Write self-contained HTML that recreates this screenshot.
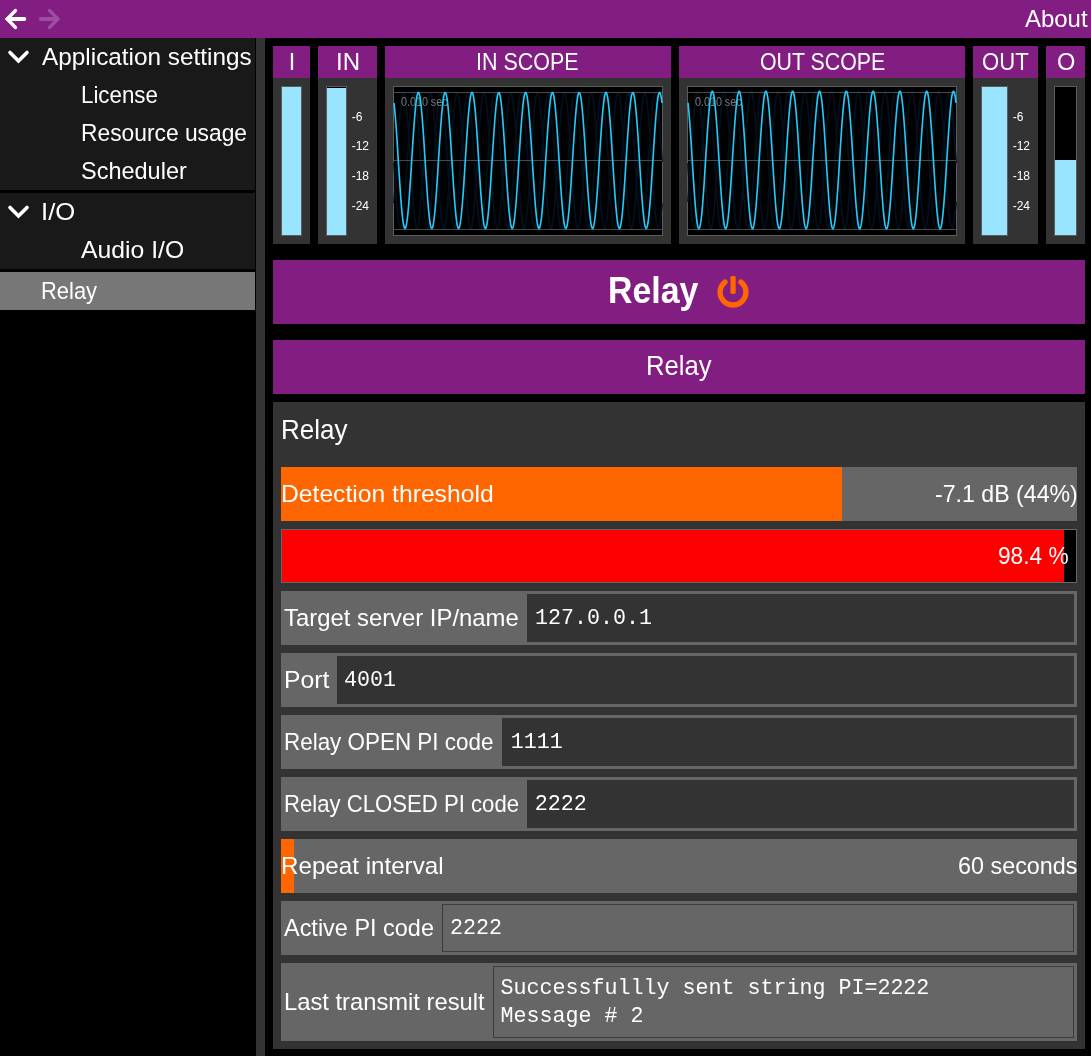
<!DOCTYPE html>
<html><head><meta charset="utf-8"><title>Relay</title><style>
html,body{margin:0;padding:0;background:#000;}
body{width:1091px;height:1056px;position:relative;overflow:hidden;font-family:"Liberation Sans",sans-serif;}
.r{position:absolute;display:block;}
.tl{position:absolute;left:0;top:0;width:1091px;height:1056px;will-change:transform;}
.t{position:absolute;white-space:pre;line-height:1;color:#fff;transform-origin:0 0;font-family:"Liberation Sans",sans-serif;}
</style></head><body>
<div class="r" style="left:0px;top:0px;width:1091px;height:38px;background:#821e82;"></div>
<div class="r" style="left:0px;top:38px;width:255px;height:152px;background:#191919;"></div>
<div class="r" style="left:0px;top:193px;width:255px;height:76px;background:#191919;"></div>
<div class="r" style="left:0px;top:272px;width:255px;height:38px;background:#777777;"></div>
<div class="r" style="left:256px;top:38px;width:9px;height:1018px;background:#333333;"></div>
<div class="r" style="left:273px;top:46px;width:37px;height:198px;background:#333333;"></div>
<div class="r" style="left:273px;top:46px;width:37px;height:32px;background:#821e82;"></div>
<div class="r" style="left:318px;top:46px;width:59px;height:198px;background:#333333;"></div>
<div class="r" style="left:318px;top:46px;width:59px;height:32px;background:#821e82;"></div>
<div class="r" style="left:385px;top:46px;width:286px;height:198px;background:#333333;"></div>
<div class="r" style="left:385px;top:46px;width:286px;height:32px;background:#821e82;"></div>
<div class="r" style="left:679px;top:46px;width:286px;height:198px;background:#333333;"></div>
<div class="r" style="left:679px;top:46px;width:286px;height:32px;background:#821e82;"></div>
<div class="r" style="left:973px;top:46px;width:65px;height:198px;background:#333333;"></div>
<div class="r" style="left:973px;top:46px;width:65px;height:32px;background:#821e82;"></div>
<div class="r" style="left:1046px;top:46px;width:39px;height:198px;background:#333333;"></div>
<div class="r" style="left:1046px;top:46px;width:39px;height:32px;background:#821e82;"></div>
<div class="r" style="left:281px;top:86px;width:21px;height:150px;background:#5c5c5c;"></div><div class="r" style="left:282px;top:87px;width:19px;height:148px;background:#000;"></div><div class="r" style="left:282px;top:87px;width:19px;height:148px;background:#99e5ff;"></div>
<div class="r" style="left:326px;top:86px;width:21px;height:150px;background:#5c5c5c;"></div><div class="r" style="left:327px;top:87px;width:19px;height:148px;background:#000;"></div><div class="r" style="left:327px;top:88px;width:19px;height:147px;background:#99e5ff;"></div>
<div class="r" style="left:981px;top:86px;width:27px;height:150px;background:#5c5c5c;"></div><div class="r" style="left:982px;top:87px;width:25px;height:148px;background:#000;"></div><div class="r" style="left:982px;top:87px;width:25px;height:148px;background:#99e5ff;"></div>
<div class="r" style="left:1054px;top:86px;width:23px;height:150px;background:#5c5c5c;"></div><div class="r" style="left:1055px;top:87px;width:21px;height:148px;background:#000;"></div><div class="r" style="left:1055px;top:160px;width:21px;height:75px;background:#99e5ff;"></div>
<svg class="r" style="left:393px;top:86px" width="270" height="150" viewBox="0 0 270 150"><rect x="0.5" y="0.5" width="269" height="149" fill="#000" stroke="#5c5c5c"/><path d="M1.0,76.1 L1.5,84.0 L2.0,91.8 L2.5,99.4 L3.0,106.6 L3.5,113.4 L4.0,119.7 L4.5,125.3 L5.0,130.3 L5.5,134.4 L6.0,137.8 L6.5,140.3 L7.0,141.8 L7.5,142.5 L8.0,142.2 L8.5,141.0 L9.0,138.9 L9.5,135.9 L10.0,132.0 L10.5,127.4 L11.0,122.0 L11.5,116.0 L12.0,109.4 L12.5,102.4 L13.0,94.9 L13.5,87.2 L14.0,79.3 L14.5,71.3 L15.0,63.4 L15.5,55.6 L16.0,48.1 L16.5,41.0 L17.0,34.3 L17.5,28.1 L18.0,22.6 L18.5,17.8 L19.0,13.8 L19.5,10.7 L20.0,8.4 L20.5,7.0 L21.0,6.5 L21.5,7.0 L22.0,8.4 L22.5,10.7 L23.0,13.8 L23.5,17.8 L24.0,22.6 L24.5,28.1 L25.0,34.3 L25.5,41.0 L26.0,48.1 L26.5,55.6 L27.0,63.4 L27.5,71.3 L28.0,79.3 L28.5,87.2 L29.0,94.9 L29.5,102.4 L30.0,109.4 L30.5,116.0 L31.0,122.0 L31.5,127.4 L32.0,132.0 L32.5,135.9 L33.0,138.9 L33.5,141.0 L34.0,142.2 L34.5,142.5 L35.0,141.8 L35.5,140.3 L36.0,137.8 L36.5,134.4 L37.0,130.3 L37.5,125.3 L38.0,119.7 L38.5,113.4 L39.0,106.6 L39.5,99.4 L40.0,91.8 L40.5,84.0 L41.0,76.1 L41.5,68.1 L42.0,60.3 L42.5,52.6 L43.0,45.2 L43.5,38.2 L44.0,31.7 L44.5,25.9 L45.0,20.6 L45.5,16.1 L46.0,12.5 L46.5,9.6 L47.0,7.7 L47.5,6.7 L48.0,6.6 L48.5,7.4 L49.0,9.2 L49.5,11.8 L50.0,15.3 L50.5,19.7 L51.0,24.8 L51.5,30.5 L52.0,36.9 L52.5,43.8 L53.0,51.1 L53.5,58.7 L54.0,66.5 L54.5,74.5 L55.0,82.5 L55.5,90.3 L56.0,97.9 L56.5,105.2 L57.0,112.1 L57.5,118.5 L58.0,124.2 L58.5,129.3 L59.0,133.7 L59.5,137.2 L60.0,139.8 L60.5,141.6 L61.0,142.4 L61.5,142.3 L62.0,141.3 L62.5,139.4 L63.0,136.5 L63.5,132.9 L64.0,128.4 L64.5,123.1 L65.0,117.3 L65.5,110.8 L66.0,103.8 L66.5,96.4 L67.0,88.7 L67.5,80.9 L68.0,72.9 L68.5,65.0 L69.0,57.2 L69.5,49.6 L70.0,42.4 L70.5,35.6 L71.0,29.3 L71.5,23.7 L72.0,18.7 L72.5,14.6 L73.0,11.2 L73.5,8.7 L74.0,7.2 L74.5,6.5 L75.0,6.8 L75.5,8.0 L76.0,10.1 L76.5,13.1 L77.0,17.0 L77.5,21.6 L78.0,27.0 L78.5,33.0 L79.0,39.6 L79.5,46.6 L80.0,54.1 L80.5,61.8 L81.0,69.7 L81.5,77.7 L82.0,85.6 L82.5,93.4 L83.0,100.9 L83.5,108.0 L84.0,114.7 L84.5,120.9 L85.0,126.4 L85.5,131.2 L86.0,135.2 L86.5,138.3 L87.0,140.6 L87.5,142.0 L88.0,142.5 L88.5,142.0 L89.0,140.6 L89.5,138.3 L90.0,135.2 L90.5,131.2 L91.0,126.4 L91.5,120.9 L92.0,114.7 L92.5,108.0 L93.0,100.9 L93.5,93.4 L94.0,85.6 L94.5,77.7 L95.0,69.7 L95.5,61.8 L96.0,54.1 L96.5,46.6 L97.0,39.6 L97.5,33.0 L98.0,27.0 L98.5,21.6 L99.0,17.0 L99.5,13.1 L100.0,10.1 L100.5,8.0 L101.0,6.8 L101.5,6.5 L102.0,7.2 L102.5,8.7 L103.0,11.2 L103.5,14.6 L104.0,18.7 L104.5,23.7 L105.0,29.3 L105.5,35.6 L106.0,42.4 L106.5,49.6 L107.0,57.2 L107.5,65.0 L108.0,72.9 L108.5,80.9 L109.0,88.7 L109.5,96.4 L110.0,103.8 L110.5,110.8 L111.0,117.3 L111.5,123.1 L112.0,128.4 L112.5,132.9 L113.0,136.5 L113.5,139.4 L114.0,141.3 L114.5,142.3 L115.0,142.4 L115.5,141.6 L116.0,139.8 L116.5,137.2 L117.0,133.7 L117.5,129.3 L118.0,124.2 L118.5,118.5 L119.0,112.1 L119.5,105.2 L120.0,97.9 L120.5,90.3 L121.0,82.5 L121.5,74.5 L122.0,66.5 L122.5,58.7 L123.0,51.1 L123.5,43.8 L124.0,36.9 L124.5,30.5 L125.0,24.8 L125.5,19.7 L126.0,15.3 L126.5,11.8 L127.0,9.2 L127.5,7.4 L128.0,6.6 L128.5,6.7 L129.0,7.7 L129.5,9.6 L130.0,12.5 L130.5,16.1 L131.0,20.6 L131.5,25.9 L132.0,31.7 L132.5,38.2 L133.0,45.2 L133.5,52.6 L134.0,60.3 L134.5,68.1 L135.0,76.1 L135.5,84.0 L136.0,91.8 L136.5,99.4 L137.0,106.6 L137.5,113.4 L138.0,119.7 L138.5,125.3 L139.0,130.3 L139.5,134.4 L140.0,137.8 L140.5,140.3 L141.0,141.8 L141.5,142.5 L142.0,142.2 L142.5,141.0 L143.0,138.9 L143.5,135.9 L144.0,132.0 L144.5,127.4 L145.0,122.0 L145.5,116.0 L146.0,109.4 L146.5,102.4 L147.0,94.9 L147.5,87.2 L148.0,79.3 L148.5,71.3 L149.0,63.4 L149.5,55.6 L150.0,48.1 L150.5,41.0 L151.0,34.3 L151.5,28.1 L152.0,22.6 L152.5,17.8 L153.0,13.8 L153.5,10.7 L154.0,8.4 L154.5,7.0 L155.0,6.5 L155.5,7.0 L156.0,8.4 L156.5,10.7 L157.0,13.8 L157.5,17.8 L158.0,22.6 L158.5,28.1 L159.0,34.3 L159.5,41.0 L160.0,48.1 L160.5,55.6 L161.0,63.4 L161.5,71.3 L162.0,79.3 L162.5,87.2 L163.0,94.9 L163.5,102.4 L164.0,109.4 L164.5,116.0 L165.0,122.0 L165.5,127.4 L166.0,132.0 L166.5,135.9 L167.0,138.9 L167.5,141.0 L168.0,142.2 L168.5,142.5 L169.0,141.8 L169.5,140.3 L170.0,137.8 L170.5,134.4 L171.0,130.3 L171.5,125.3 L172.0,119.7 L172.5,113.4 L173.0,106.6 L173.5,99.4 L174.0,91.8 L174.5,84.0 L175.0,76.1 L175.5,68.1 L176.0,60.3 L176.5,52.6 L177.0,45.2 L177.5,38.2 L178.0,31.7 L178.5,25.9 L179.0,20.6 L179.5,16.1 L180.0,12.5 L180.5,9.6 L181.0,7.7 L181.5,6.7 L182.0,6.6 L182.5,7.4 L183.0,9.2 L183.5,11.8 L184.0,15.3 L184.5,19.7 L185.0,24.8 L185.5,30.5 L186.0,36.9 L186.5,43.8 L187.0,51.1 L187.5,58.7 L188.0,66.5 L188.5,74.5 L189.0,82.5 L189.5,90.3 L190.0,97.9 L190.5,105.2 L191.0,112.1 L191.5,118.5 L192.0,124.2 L192.5,129.3 L193.0,133.7 L193.5,137.2 L194.0,139.8 L194.5,141.6 L195.0,142.4 L195.5,142.3 L196.0,141.3 L196.5,139.4 L197.0,136.5 L197.5,132.9 L198.0,128.4 L198.5,123.1 L199.0,117.3 L199.5,110.8 L200.0,103.8 L200.5,96.4 L201.0,88.7 L201.5,80.9 L202.0,72.9 L202.5,65.0 L203.0,57.2 L203.5,49.6 L204.0,42.4 L204.5,35.6 L205.0,29.3 L205.5,23.7 L206.0,18.7 L206.5,14.6 L207.0,11.2 L207.5,8.7 L208.0,7.2 L208.5,6.5 L209.0,6.8 L209.5,8.0 L210.0,10.1 L210.5,13.1 L211.0,17.0 L211.5,21.6 L212.0,27.0 L212.5,33.0 L213.0,39.6 L213.5,46.6 L214.0,54.1 L214.5,61.8 L215.0,69.7 L215.5,77.7 L216.0,85.6 L216.5,93.4 L217.0,100.9 L217.5,108.0 L218.0,114.7 L218.5,120.9 L219.0,126.4 L219.5,131.2 L220.0,135.2 L220.5,138.3 L221.0,140.6 L221.5,142.0 L222.0,142.5 L222.5,142.0 L223.0,140.6 L223.5,138.3 L224.0,135.2 L224.5,131.2 L225.0,126.4 L225.5,120.9 L226.0,114.7 L226.5,108.0 L227.0,100.9 L227.5,93.4 L228.0,85.6 L228.5,77.7 L229.0,69.7 L229.5,61.8 L230.0,54.1 L230.5,46.6 L231.0,39.6 L231.5,33.0 L232.0,27.0 L232.5,21.6 L233.0,17.0 L233.5,13.1 L234.0,10.1 L234.5,8.0 L235.0,6.8 L235.5,6.5 L236.0,7.2 L236.5,8.7 L237.0,11.2 L237.5,14.6 L238.0,18.7 L238.5,23.7 L239.0,29.3 L239.5,35.6 L240.0,42.4 L240.5,49.6 L241.0,57.2 L241.5,65.0 L242.0,72.9 L242.5,80.9 L243.0,88.7 L243.5,96.4 L244.0,103.8 L244.5,110.8 L245.0,117.3 L245.5,123.1 L246.0,128.4 L246.5,132.9 L247.0,136.5 L247.5,139.4 L248.0,141.3 L248.5,142.3 L249.0,142.4 L249.5,141.6 L250.0,139.8 L250.5,137.2 L251.0,133.7 L251.5,129.3 L252.0,124.2 L252.5,118.5 L253.0,112.1 L253.5,105.2 L254.0,97.9 L254.5,90.3 L255.0,82.5 L255.5,74.5 L256.0,66.5 L256.5,58.7 L257.0,51.1 L257.5,43.8 L258.0,36.9 L258.5,30.5 L259.0,24.8 L259.5,19.7 L260.0,15.3 L260.5,11.8 L261.0,9.2 L261.5,7.4 L262.0,6.6 L262.5,6.7 L263.0,7.7 L263.5,9.6 L264.0,12.5 L264.5,16.1 L265.0,20.6 L265.5,25.9 L266.0,31.7 L266.5,38.2 L267.0,45.2 L267.5,52.6 L268.0,60.3 L268.5,68.1 L269.0,76.1" fill="none" stroke="#030f1c" stroke-width="1.8"/><path d="M1.0,117.3 L1.5,110.8 L2.0,103.8 L2.5,96.4 L3.0,88.7 L3.5,80.9 L4.0,72.9 L4.5,65.0 L5.0,57.2 L5.5,49.6 L6.0,42.4 L6.5,35.6 L7.0,29.3 L7.5,23.7 L8.0,18.7 L8.5,14.6 L9.0,11.2 L9.5,8.7 L10.0,7.2 L10.5,6.5 L11.0,6.8 L11.5,8.0 L12.0,10.1 L12.5,13.1 L13.0,17.0 L13.5,21.6 L14.0,27.0 L14.5,33.0 L15.0,39.6 L15.5,46.6 L16.0,54.1 L16.5,61.8 L17.0,69.7 L17.5,77.7 L18.0,85.6 L18.5,93.4 L19.0,100.9 L19.5,108.0 L20.0,114.7 L20.5,120.9 L21.0,126.4 L21.5,131.2 L22.0,135.2 L22.5,138.3 L23.0,140.6 L23.5,142.0 L24.0,142.5 L24.5,142.0 L25.0,140.6 L25.5,138.3 L26.0,135.2 L26.5,131.2 L27.0,126.4 L27.5,120.9 L28.0,114.7 L28.5,108.0 L29.0,100.9 L29.5,93.4 L30.0,85.6 L30.5,77.7 L31.0,69.7 L31.5,61.8 L32.0,54.1 L32.5,46.6 L33.0,39.6 L33.5,33.0 L34.0,27.0 L34.5,21.6 L35.0,17.0 L35.5,13.1 L36.0,10.1 L36.5,8.0 L37.0,6.8 L37.5,6.5 L38.0,7.2 L38.5,8.7 L39.0,11.2 L39.5,14.6 L40.0,18.7 L40.5,23.7 L41.0,29.3 L41.5,35.6 L42.0,42.4 L42.5,49.6 L43.0,57.2 L43.5,65.0 L44.0,72.9 L44.5,80.9 L45.0,88.7 L45.5,96.4 L46.0,103.8 L46.5,110.8 L47.0,117.3 L47.5,123.1 L48.0,128.4 L48.5,132.9 L49.0,136.5 L49.5,139.4 L50.0,141.3 L50.5,142.3 L51.0,142.4 L51.5,141.6 L52.0,139.8 L52.5,137.2 L53.0,133.7 L53.5,129.3 L54.0,124.2 L54.5,118.5 L55.0,112.1 L55.5,105.2 L56.0,97.9 L56.5,90.3 L57.0,82.5 L57.5,74.5 L58.0,66.5 L58.5,58.7 L59.0,51.1 L59.5,43.8 L60.0,36.9 L60.5,30.5 L61.0,24.8 L61.5,19.7 L62.0,15.3 L62.5,11.8 L63.0,9.2 L63.5,7.4 L64.0,6.6 L64.5,6.7 L65.0,7.7 L65.5,9.6 L66.0,12.5 L66.5,16.1 L67.0,20.6 L67.5,25.9 L68.0,31.7 L68.5,38.2 L69.0,45.2 L69.5,52.6 L70.0,60.3 L70.5,68.1 L71.0,76.1 L71.5,84.0 L72.0,91.8 L72.5,99.4 L73.0,106.6 L73.5,113.4 L74.0,119.7 L74.5,125.3 L75.0,130.3 L75.5,134.4 L76.0,137.8 L76.5,140.3 L77.0,141.8 L77.5,142.5 L78.0,142.2 L78.5,141.0 L79.0,138.9 L79.5,135.9 L80.0,132.0 L80.5,127.4 L81.0,122.0 L81.5,116.0 L82.0,109.4 L82.5,102.4 L83.0,94.9 L83.5,87.2 L84.0,79.3 L84.5,71.3 L85.0,63.4 L85.5,55.6 L86.0,48.1 L86.5,41.0 L87.0,34.3 L87.5,28.1 L88.0,22.6 L88.5,17.8 L89.0,13.8 L89.5,10.7 L90.0,8.4 L90.5,7.0 L91.0,6.5 L91.5,7.0 L92.0,8.4 L92.5,10.7 L93.0,13.8 L93.5,17.8 L94.0,22.6 L94.5,28.1 L95.0,34.3 L95.5,41.0 L96.0,48.1 L96.5,55.6 L97.0,63.4 L97.5,71.3 L98.0,79.3 L98.5,87.2 L99.0,94.9 L99.5,102.4 L100.0,109.4 L100.5,116.0 L101.0,122.0 L101.5,127.4 L102.0,132.0 L102.5,135.9 L103.0,138.9 L103.5,141.0 L104.0,142.2 L104.5,142.5 L105.0,141.8 L105.5,140.3 L106.0,137.8 L106.5,134.4 L107.0,130.3 L107.5,125.3 L108.0,119.7 L108.5,113.4 L109.0,106.6 L109.5,99.4 L110.0,91.8 L110.5,84.0 L111.0,76.1 L111.5,68.1 L112.0,60.3 L112.5,52.6 L113.0,45.2 L113.5,38.2 L114.0,31.7 L114.5,25.9 L115.0,20.6 L115.5,16.1 L116.0,12.5 L116.5,9.6 L117.0,7.7 L117.5,6.7 L118.0,6.6 L118.5,7.4 L119.0,9.2 L119.5,11.8 L120.0,15.3 L120.5,19.7 L121.0,24.8 L121.5,30.5 L122.0,36.9 L122.5,43.8 L123.0,51.1 L123.5,58.7 L124.0,66.5 L124.5,74.5 L125.0,82.5 L125.5,90.3 L126.0,97.9 L126.5,105.2 L127.0,112.1 L127.5,118.5 L128.0,124.2 L128.5,129.3 L129.0,133.7 L129.5,137.2 L130.0,139.8 L130.5,141.6 L131.0,142.4 L131.5,142.3 L132.0,141.3 L132.5,139.4 L133.0,136.5 L133.5,132.9 L134.0,128.4 L134.5,123.1 L135.0,117.3 L135.5,110.8 L136.0,103.8 L136.5,96.4 L137.0,88.7 L137.5,80.9 L138.0,72.9 L138.5,65.0 L139.0,57.2 L139.5,49.6 L140.0,42.4 L140.5,35.6 L141.0,29.3 L141.5,23.7 L142.0,18.7 L142.5,14.6 L143.0,11.2 L143.5,8.7 L144.0,7.2 L144.5,6.5 L145.0,6.8 L145.5,8.0 L146.0,10.1 L146.5,13.1 L147.0,17.0 L147.5,21.6 L148.0,27.0 L148.5,33.0 L149.0,39.6 L149.5,46.6 L150.0,54.1 L150.5,61.8 L151.0,69.7 L151.5,77.7 L152.0,85.6 L152.5,93.4 L153.0,100.9 L153.5,108.0 L154.0,114.7 L154.5,120.9 L155.0,126.4 L155.5,131.2 L156.0,135.2 L156.5,138.3 L157.0,140.6 L157.5,142.0 L158.0,142.5 L158.5,142.0 L159.0,140.6 L159.5,138.3 L160.0,135.2 L160.5,131.2 L161.0,126.4 L161.5,120.9 L162.0,114.7 L162.5,108.0 L163.0,100.9 L163.5,93.4 L164.0,85.6 L164.5,77.7 L165.0,69.7 L165.5,61.8 L166.0,54.1 L166.5,46.6 L167.0,39.6 L167.5,33.0 L168.0,27.0 L168.5,21.6 L169.0,17.0 L169.5,13.1 L170.0,10.1 L170.5,8.0 L171.0,6.8 L171.5,6.5 L172.0,7.2 L172.5,8.7 L173.0,11.2 L173.5,14.6 L174.0,18.7 L174.5,23.7 L175.0,29.3 L175.5,35.6 L176.0,42.4 L176.5,49.6 L177.0,57.2 L177.5,65.0 L178.0,72.9 L178.5,80.9 L179.0,88.7 L179.5,96.4 L180.0,103.8 L180.5,110.8 L181.0,117.3 L181.5,123.1 L182.0,128.4 L182.5,132.9 L183.0,136.5 L183.5,139.4 L184.0,141.3 L184.5,142.3 L185.0,142.4 L185.5,141.6 L186.0,139.8 L186.5,137.2 L187.0,133.7 L187.5,129.3 L188.0,124.2 L188.5,118.5 L189.0,112.1 L189.5,105.2 L190.0,97.9 L190.5,90.3 L191.0,82.5 L191.5,74.5 L192.0,66.5 L192.5,58.7 L193.0,51.1 L193.5,43.8 L194.0,36.9 L194.5,30.5 L195.0,24.8 L195.5,19.7 L196.0,15.3 L196.5,11.8 L197.0,9.2 L197.5,7.4 L198.0,6.6 L198.5,6.7 L199.0,7.7 L199.5,9.6 L200.0,12.5 L200.5,16.1 L201.0,20.6 L201.5,25.9 L202.0,31.7 L202.5,38.2 L203.0,45.2 L203.5,52.6 L204.0,60.3 L204.5,68.1 L205.0,76.1 L205.5,84.0 L206.0,91.8 L206.5,99.4 L207.0,106.6 L207.5,113.4 L208.0,119.7 L208.5,125.3 L209.0,130.3 L209.5,134.4 L210.0,137.8 L210.5,140.3 L211.0,141.8 L211.5,142.5 L212.0,142.2 L212.5,141.0 L213.0,138.9 L213.5,135.9 L214.0,132.0 L214.5,127.4 L215.0,122.0 L215.5,116.0 L216.0,109.4 L216.5,102.4 L217.0,94.9 L217.5,87.2 L218.0,79.3 L218.5,71.3 L219.0,63.4 L219.5,55.6 L220.0,48.1 L220.5,41.0 L221.0,34.3 L221.5,28.1 L222.0,22.6 L222.5,17.8 L223.0,13.8 L223.5,10.7 L224.0,8.4 L224.5,7.0 L225.0,6.5 L225.5,7.0 L226.0,8.4 L226.5,10.7 L227.0,13.8 L227.5,17.8 L228.0,22.6 L228.5,28.1 L229.0,34.3 L229.5,41.0 L230.0,48.1 L230.5,55.6 L231.0,63.4 L231.5,71.3 L232.0,79.3 L232.5,87.2 L233.0,94.9 L233.5,102.4 L234.0,109.4 L234.5,116.0 L235.0,122.0 L235.5,127.4 L236.0,132.0 L236.5,135.9 L237.0,138.9 L237.5,141.0 L238.0,142.2 L238.5,142.5 L239.0,141.8 L239.5,140.3 L240.0,137.8 L240.5,134.4 L241.0,130.3 L241.5,125.3 L242.0,119.7 L242.5,113.4 L243.0,106.6 L243.5,99.4 L244.0,91.8 L244.5,84.0 L245.0,76.1 L245.5,68.1 L246.0,60.3 L246.5,52.6 L247.0,45.2 L247.5,38.2 L248.0,31.7 L248.5,25.9 L249.0,20.6 L249.5,16.1 L250.0,12.5 L250.5,9.6 L251.0,7.7 L251.5,6.7 L252.0,6.6 L252.5,7.4 L253.0,9.2 L253.5,11.8 L254.0,15.3 L254.5,19.7 L255.0,24.8 L255.5,30.5 L256.0,36.9 L256.5,43.8 L257.0,51.1 L257.5,58.7 L258.0,66.5 L258.5,74.5 L259.0,82.5 L259.5,90.3 L260.0,97.9 L260.5,105.2 L261.0,112.1 L261.5,118.5 L262.0,124.2 L262.5,129.3 L263.0,133.7 L263.5,137.2 L264.0,139.8 L264.5,141.6 L265.0,142.4 L265.5,142.3 L266.0,141.3 L266.5,139.4 L267.0,136.5 L267.5,132.9 L268.0,128.4 L268.5,123.1 L269.0,117.3" fill="none" stroke="#030f1c" stroke-width="1.8"/><line x1="1" x2="269" y1="6.5" y2="6.5" stroke="#4a4a4a" stroke-width="1"/><line x1="1" x2="269" y1="74.5" y2="74.5" stroke="#4a4a4a" stroke-width="1"/><line x1="1" x2="269" y1="143.5" y2="143.5" stroke="#4a4a4a" stroke-width="1"/></svg>
<svg class="r" style="left:687px;top:86px" width="270" height="150" viewBox="0 0 270 150"><rect x="0.5" y="0.5" width="269" height="149" fill="#000" stroke="#5c5c5c"/><path d="M1.0,77.2 L1.5,85.2 L2.0,93.1 L2.5,100.7 L3.0,107.9 L3.5,114.6 L4.0,120.8 L4.5,126.4 L5.0,131.2 L5.5,135.3 L6.0,138.5 L6.5,140.8 L7.0,142.2 L7.5,142.7 L8.0,142.2 L8.5,140.8 L9.0,138.5 L9.5,135.3 L10.0,131.2 L10.5,126.4 L11.0,120.8 L11.5,114.6 L12.0,107.9 L12.5,100.7 L13.0,93.1 L13.5,85.2 L14.0,77.2 L14.5,69.2 L15.0,61.2 L15.5,53.4 L16.0,45.9 L16.5,38.7 L17.0,32.1 L17.5,26.0 L18.0,20.6 L18.5,15.9 L19.0,12.0 L19.5,9.0 L20.0,6.8 L20.5,5.6 L21.0,5.3 L21.5,6.0 L22.0,7.6 L22.5,10.1 L23.0,13.5 L23.5,17.7 L24.0,22.7 L24.5,28.4 L25.0,34.7 L25.5,41.5 L26.0,48.8 L26.5,56.5 L27.0,64.4 L27.5,72.4 L28.0,80.4 L28.5,88.4 L29.0,96.1 L29.5,103.6 L30.0,110.6 L30.5,117.2 L31.0,123.1 L31.5,128.4 L32.0,133.0 L32.5,136.7 L33.0,139.5 L33.5,141.5 L34.0,142.5 L34.5,142.6 L35.0,141.8 L35.5,140.0 L36.0,137.3 L36.5,133.8 L37.0,129.4 L37.5,124.3 L38.0,118.4 L38.5,112.0 L39.0,105.0 L39.5,97.7 L40.0,90.0 L40.5,82.0 L41.0,74.0 L41.5,66.0 L42.0,58.0 L42.5,50.3 L43.0,43.0 L43.5,36.0 L44.0,29.6 L44.5,23.7 L45.0,18.6 L45.5,14.2 L46.0,10.7 L46.5,8.0 L47.0,6.2 L47.5,5.4 L48.0,5.5 L48.5,6.5 L49.0,8.5 L49.5,11.3 L50.0,15.0 L50.5,19.6 L51.0,24.9 L51.5,30.8 L52.0,37.4 L52.5,44.4 L53.0,51.9 L53.5,59.6 L54.0,67.6 L54.5,75.6 L55.0,83.6 L55.5,91.5 L56.0,99.2 L56.5,106.5 L57.0,113.3 L57.5,119.6 L58.0,125.3 L58.5,130.3 L59.0,134.5 L59.5,137.9 L60.0,140.4 L60.5,142.0 L61.0,142.7 L61.5,142.4 L62.0,141.2 L62.5,139.0 L63.0,136.0 L63.5,132.1 L64.0,127.4 L64.5,122.0 L65.0,115.9 L65.5,109.3 L66.0,102.1 L66.5,94.6 L67.0,86.8 L67.5,78.8 L68.0,70.8 L68.5,62.8 L69.0,54.9 L69.5,47.3 L70.0,40.1 L70.5,33.4 L71.0,27.2 L71.5,21.6 L72.0,16.8 L72.5,12.7 L73.0,9.5 L73.5,7.2 L74.0,5.8 L74.5,5.3 L75.0,5.8 L75.5,7.2 L76.0,9.5 L76.5,12.7 L77.0,16.8 L77.5,21.6 L78.0,27.2 L78.5,33.4 L79.0,40.1 L79.5,47.3 L80.0,54.9 L80.5,62.8 L81.0,70.8 L81.5,78.8 L82.0,86.8 L82.5,94.6 L83.0,102.1 L83.5,109.3 L84.0,115.9 L84.5,122.0 L85.0,127.4 L85.5,132.1 L86.0,136.0 L86.5,139.0 L87.0,141.2 L87.5,142.4 L88.0,142.7 L88.5,142.0 L89.0,140.4 L89.5,137.9 L90.0,134.5 L90.5,130.3 L91.0,125.3 L91.5,119.6 L92.0,113.3 L92.5,106.5 L93.0,99.2 L93.5,91.5 L94.0,83.6 L94.5,75.6 L95.0,67.6 L95.5,59.6 L96.0,51.9 L96.5,44.4 L97.0,37.4 L97.5,30.8 L98.0,24.9 L98.5,19.6 L99.0,15.0 L99.5,11.3 L100.0,8.5 L100.5,6.5 L101.0,5.5 L101.5,5.4 L102.0,6.2 L102.5,8.0 L103.0,10.7 L103.5,14.2 L104.0,18.6 L104.5,23.7 L105.0,29.6 L105.5,36.0 L106.0,43.0 L106.5,50.3 L107.0,58.0 L107.5,66.0 L108.0,74.0 L108.5,82.0 L109.0,90.0 L109.5,97.7 L110.0,105.0 L110.5,112.0 L111.0,118.4 L111.5,124.3 L112.0,129.4 L112.5,133.8 L113.0,137.3 L113.5,140.0 L114.0,141.8 L114.5,142.6 L115.0,142.5 L115.5,141.5 L116.0,139.5 L116.5,136.7 L117.0,133.0 L117.5,128.4 L118.0,123.1 L118.5,117.2 L119.0,110.6 L119.5,103.6 L120.0,96.1 L120.5,88.4 L121.0,80.4 L121.5,72.4 L122.0,64.4 L122.5,56.5 L123.0,48.8 L123.5,41.5 L124.0,34.7 L124.5,28.4 L125.0,22.7 L125.5,17.7 L126.0,13.5 L126.5,10.1 L127.0,7.6 L127.5,6.0 L128.0,5.3 L128.5,5.6 L129.0,6.8 L129.5,9.0 L130.0,12.0 L130.5,15.9 L131.0,20.6 L131.5,26.0 L132.0,32.1 L132.5,38.7 L133.0,45.9 L133.5,53.4 L134.0,61.2 L134.5,69.2 L135.0,77.2 L135.5,85.2 L136.0,93.1 L136.5,100.7 L137.0,107.9 L137.5,114.6 L138.0,120.8 L138.5,126.4 L139.0,131.2 L139.5,135.3 L140.0,138.5 L140.5,140.8 L141.0,142.2 L141.5,142.7 L142.0,142.2 L142.5,140.8 L143.0,138.5 L143.5,135.3 L144.0,131.2 L144.5,126.4 L145.0,120.8 L145.5,114.6 L146.0,107.9 L146.5,100.7 L147.0,93.1 L147.5,85.2 L148.0,77.2 L148.5,69.2 L149.0,61.2 L149.5,53.4 L150.0,45.9 L150.5,38.7 L151.0,32.1 L151.5,26.0 L152.0,20.6 L152.5,15.9 L153.0,12.0 L153.5,9.0 L154.0,6.8 L154.5,5.6 L155.0,5.3 L155.5,6.0 L156.0,7.6 L156.5,10.1 L157.0,13.5 L157.5,17.7 L158.0,22.7 L158.5,28.4 L159.0,34.7 L159.5,41.5 L160.0,48.8 L160.5,56.5 L161.0,64.4 L161.5,72.4 L162.0,80.4 L162.5,88.4 L163.0,96.1 L163.5,103.6 L164.0,110.6 L164.5,117.2 L165.0,123.1 L165.5,128.4 L166.0,133.0 L166.5,136.7 L167.0,139.5 L167.5,141.5 L168.0,142.5 L168.5,142.6 L169.0,141.8 L169.5,140.0 L170.0,137.3 L170.5,133.8 L171.0,129.4 L171.5,124.3 L172.0,118.4 L172.5,112.0 L173.0,105.0 L173.5,97.7 L174.0,90.0 L174.5,82.0 L175.0,74.0 L175.5,66.0 L176.0,58.0 L176.5,50.3 L177.0,43.0 L177.5,36.0 L178.0,29.6 L178.5,23.7 L179.0,18.6 L179.5,14.2 L180.0,10.7 L180.5,8.0 L181.0,6.2 L181.5,5.4 L182.0,5.5 L182.5,6.5 L183.0,8.5 L183.5,11.3 L184.0,15.0 L184.5,19.6 L185.0,24.9 L185.5,30.8 L186.0,37.4 L186.5,44.4 L187.0,51.9 L187.5,59.6 L188.0,67.6 L188.5,75.6 L189.0,83.6 L189.5,91.5 L190.0,99.2 L190.5,106.5 L191.0,113.3 L191.5,119.6 L192.0,125.3 L192.5,130.3 L193.0,134.5 L193.5,137.9 L194.0,140.4 L194.5,142.0 L195.0,142.7 L195.5,142.4 L196.0,141.2 L196.5,139.0 L197.0,136.0 L197.5,132.1 L198.0,127.4 L198.5,122.0 L199.0,115.9 L199.5,109.3 L200.0,102.1 L200.5,94.6 L201.0,86.8 L201.5,78.8 L202.0,70.8 L202.5,62.8 L203.0,54.9 L203.5,47.3 L204.0,40.1 L204.5,33.4 L205.0,27.2 L205.5,21.6 L206.0,16.8 L206.5,12.7 L207.0,9.5 L207.5,7.2 L208.0,5.8 L208.5,5.3 L209.0,5.8 L209.5,7.2 L210.0,9.5 L210.5,12.7 L211.0,16.8 L211.5,21.6 L212.0,27.2 L212.5,33.4 L213.0,40.1 L213.5,47.3 L214.0,54.9 L214.5,62.8 L215.0,70.8 L215.5,78.8 L216.0,86.8 L216.5,94.6 L217.0,102.1 L217.5,109.3 L218.0,115.9 L218.5,122.0 L219.0,127.4 L219.5,132.1 L220.0,136.0 L220.5,139.0 L221.0,141.2 L221.5,142.4 L222.0,142.7 L222.5,142.0 L223.0,140.4 L223.5,137.9 L224.0,134.5 L224.5,130.3 L225.0,125.3 L225.5,119.6 L226.0,113.3 L226.5,106.5 L227.0,99.2 L227.5,91.5 L228.0,83.6 L228.5,75.6 L229.0,67.6 L229.5,59.6 L230.0,51.9 L230.5,44.4 L231.0,37.4 L231.5,30.8 L232.0,24.9 L232.5,19.6 L233.0,15.0 L233.5,11.3 L234.0,8.5 L234.5,6.5 L235.0,5.5 L235.5,5.4 L236.0,6.2 L236.5,8.0 L237.0,10.7 L237.5,14.2 L238.0,18.6 L238.5,23.7 L239.0,29.6 L239.5,36.0 L240.0,43.0 L240.5,50.3 L241.0,58.0 L241.5,66.0 L242.0,74.0 L242.5,82.0 L243.0,90.0 L243.5,97.7 L244.0,105.0 L244.5,112.0 L245.0,118.4 L245.5,124.3 L246.0,129.4 L246.5,133.8 L247.0,137.3 L247.5,140.0 L248.0,141.8 L248.5,142.6 L249.0,142.5 L249.5,141.5 L250.0,139.5 L250.5,136.7 L251.0,133.0 L251.5,128.4 L252.0,123.1 L252.5,117.2 L253.0,110.6 L253.5,103.6 L254.0,96.1 L254.5,88.4 L255.0,80.4 L255.5,72.4 L256.0,64.4 L256.5,56.5 L257.0,48.8 L257.5,41.5 L258.0,34.7 L258.5,28.4 L259.0,22.7 L259.5,17.7 L260.0,13.5 L260.5,10.1 L261.0,7.6 L261.5,6.0 L262.0,5.3 L262.5,5.6 L263.0,6.8 L263.5,9.0 L264.0,12.0 L264.5,15.9 L265.0,20.6 L265.5,26.0 L266.0,32.1 L266.5,38.7 L267.0,45.9 L267.5,53.4 L268.0,61.2 L268.5,69.2 L269.0,77.2" fill="none" stroke="#030f1c" stroke-width="1.8"/><path d="M1.0,115.9 L1.5,109.3 L2.0,102.1 L2.5,94.6 L3.0,86.8 L3.5,78.8 L4.0,70.8 L4.5,62.8 L5.0,54.9 L5.5,47.3 L6.0,40.1 L6.5,33.4 L7.0,27.2 L7.5,21.6 L8.0,16.8 L8.5,12.7 L9.0,9.5 L9.5,7.2 L10.0,5.8 L10.5,5.3 L11.0,5.8 L11.5,7.2 L12.0,9.5 L12.5,12.7 L13.0,16.8 L13.5,21.6 L14.0,27.2 L14.5,33.4 L15.0,40.1 L15.5,47.3 L16.0,54.9 L16.5,62.8 L17.0,70.8 L17.5,78.8 L18.0,86.8 L18.5,94.6 L19.0,102.1 L19.5,109.3 L20.0,115.9 L20.5,122.0 L21.0,127.4 L21.5,132.1 L22.0,136.0 L22.5,139.0 L23.0,141.2 L23.5,142.4 L24.0,142.7 L24.5,142.0 L25.0,140.4 L25.5,137.9 L26.0,134.5 L26.5,130.3 L27.0,125.3 L27.5,119.6 L28.0,113.3 L28.5,106.5 L29.0,99.2 L29.5,91.5 L30.0,83.6 L30.5,75.6 L31.0,67.6 L31.5,59.6 L32.0,51.9 L32.5,44.4 L33.0,37.4 L33.5,30.8 L34.0,24.9 L34.5,19.6 L35.0,15.0 L35.5,11.3 L36.0,8.5 L36.5,6.5 L37.0,5.5 L37.5,5.4 L38.0,6.2 L38.5,8.0 L39.0,10.7 L39.5,14.2 L40.0,18.6 L40.5,23.7 L41.0,29.6 L41.5,36.0 L42.0,43.0 L42.5,50.3 L43.0,58.0 L43.5,66.0 L44.0,74.0 L44.5,82.0 L45.0,90.0 L45.5,97.7 L46.0,105.0 L46.5,112.0 L47.0,118.4 L47.5,124.3 L48.0,129.4 L48.5,133.8 L49.0,137.3 L49.5,140.0 L50.0,141.8 L50.5,142.6 L51.0,142.5 L51.5,141.5 L52.0,139.5 L52.5,136.7 L53.0,133.0 L53.5,128.4 L54.0,123.1 L54.5,117.2 L55.0,110.6 L55.5,103.6 L56.0,96.1 L56.5,88.4 L57.0,80.4 L57.5,72.4 L58.0,64.4 L58.5,56.5 L59.0,48.8 L59.5,41.5 L60.0,34.7 L60.5,28.4 L61.0,22.7 L61.5,17.7 L62.0,13.5 L62.5,10.1 L63.0,7.6 L63.5,6.0 L64.0,5.3 L64.5,5.6 L65.0,6.8 L65.5,9.0 L66.0,12.0 L66.5,15.9 L67.0,20.6 L67.5,26.0 L68.0,32.1 L68.5,38.7 L69.0,45.9 L69.5,53.4 L70.0,61.2 L70.5,69.2 L71.0,77.2 L71.5,85.2 L72.0,93.1 L72.5,100.7 L73.0,107.9 L73.5,114.6 L74.0,120.8 L74.5,126.4 L75.0,131.2 L75.5,135.3 L76.0,138.5 L76.5,140.8 L77.0,142.2 L77.5,142.7 L78.0,142.2 L78.5,140.8 L79.0,138.5 L79.5,135.3 L80.0,131.2 L80.5,126.4 L81.0,120.8 L81.5,114.6 L82.0,107.9 L82.5,100.7 L83.0,93.1 L83.5,85.2 L84.0,77.2 L84.5,69.2 L85.0,61.2 L85.5,53.4 L86.0,45.9 L86.5,38.7 L87.0,32.1 L87.5,26.0 L88.0,20.6 L88.5,15.9 L89.0,12.0 L89.5,9.0 L90.0,6.8 L90.5,5.6 L91.0,5.3 L91.5,6.0 L92.0,7.6 L92.5,10.1 L93.0,13.5 L93.5,17.7 L94.0,22.7 L94.5,28.4 L95.0,34.7 L95.5,41.5 L96.0,48.8 L96.5,56.5 L97.0,64.4 L97.5,72.4 L98.0,80.4 L98.5,88.4 L99.0,96.1 L99.5,103.6 L100.0,110.6 L100.5,117.2 L101.0,123.1 L101.5,128.4 L102.0,133.0 L102.5,136.7 L103.0,139.5 L103.5,141.5 L104.0,142.5 L104.5,142.6 L105.0,141.8 L105.5,140.0 L106.0,137.3 L106.5,133.8 L107.0,129.4 L107.5,124.3 L108.0,118.4 L108.5,112.0 L109.0,105.0 L109.5,97.7 L110.0,90.0 L110.5,82.0 L111.0,74.0 L111.5,66.0 L112.0,58.0 L112.5,50.3 L113.0,43.0 L113.5,36.0 L114.0,29.6 L114.5,23.7 L115.0,18.6 L115.5,14.2 L116.0,10.7 L116.5,8.0 L117.0,6.2 L117.5,5.4 L118.0,5.5 L118.5,6.5 L119.0,8.5 L119.5,11.3 L120.0,15.0 L120.5,19.6 L121.0,24.9 L121.5,30.8 L122.0,37.4 L122.5,44.4 L123.0,51.9 L123.5,59.6 L124.0,67.6 L124.5,75.6 L125.0,83.6 L125.5,91.5 L126.0,99.2 L126.5,106.5 L127.0,113.3 L127.5,119.6 L128.0,125.3 L128.5,130.3 L129.0,134.5 L129.5,137.9 L130.0,140.4 L130.5,142.0 L131.0,142.7 L131.5,142.4 L132.0,141.2 L132.5,139.0 L133.0,136.0 L133.5,132.1 L134.0,127.4 L134.5,122.0 L135.0,115.9 L135.5,109.3 L136.0,102.1 L136.5,94.6 L137.0,86.8 L137.5,78.8 L138.0,70.8 L138.5,62.8 L139.0,54.9 L139.5,47.3 L140.0,40.1 L140.5,33.4 L141.0,27.2 L141.5,21.6 L142.0,16.8 L142.5,12.7 L143.0,9.5 L143.5,7.2 L144.0,5.8 L144.5,5.3 L145.0,5.8 L145.5,7.2 L146.0,9.5 L146.5,12.7 L147.0,16.8 L147.5,21.6 L148.0,27.2 L148.5,33.4 L149.0,40.1 L149.5,47.3 L150.0,54.9 L150.5,62.8 L151.0,70.8 L151.5,78.8 L152.0,86.8 L152.5,94.6 L153.0,102.1 L153.5,109.3 L154.0,115.9 L154.5,122.0 L155.0,127.4 L155.5,132.1 L156.0,136.0 L156.5,139.0 L157.0,141.2 L157.5,142.4 L158.0,142.7 L158.5,142.0 L159.0,140.4 L159.5,137.9 L160.0,134.5 L160.5,130.3 L161.0,125.3 L161.5,119.6 L162.0,113.3 L162.5,106.5 L163.0,99.2 L163.5,91.5 L164.0,83.6 L164.5,75.6 L165.0,67.6 L165.5,59.6 L166.0,51.9 L166.5,44.4 L167.0,37.4 L167.5,30.8 L168.0,24.9 L168.5,19.6 L169.0,15.0 L169.5,11.3 L170.0,8.5 L170.5,6.5 L171.0,5.5 L171.5,5.4 L172.0,6.2 L172.5,8.0 L173.0,10.7 L173.5,14.2 L174.0,18.6 L174.5,23.7 L175.0,29.6 L175.5,36.0 L176.0,43.0 L176.5,50.3 L177.0,58.0 L177.5,66.0 L178.0,74.0 L178.5,82.0 L179.0,90.0 L179.5,97.7 L180.0,105.0 L180.5,112.0 L181.0,118.4 L181.5,124.3 L182.0,129.4 L182.5,133.8 L183.0,137.3 L183.5,140.0 L184.0,141.8 L184.5,142.6 L185.0,142.5 L185.5,141.5 L186.0,139.5 L186.5,136.7 L187.0,133.0 L187.5,128.4 L188.0,123.1 L188.5,117.2 L189.0,110.6 L189.5,103.6 L190.0,96.1 L190.5,88.4 L191.0,80.4 L191.5,72.4 L192.0,64.4 L192.5,56.5 L193.0,48.8 L193.5,41.5 L194.0,34.7 L194.5,28.4 L195.0,22.7 L195.5,17.7 L196.0,13.5 L196.5,10.1 L197.0,7.6 L197.5,6.0 L198.0,5.3 L198.5,5.6 L199.0,6.8 L199.5,9.0 L200.0,12.0 L200.5,15.9 L201.0,20.6 L201.5,26.0 L202.0,32.1 L202.5,38.7 L203.0,45.9 L203.5,53.4 L204.0,61.2 L204.5,69.2 L205.0,77.2 L205.5,85.2 L206.0,93.1 L206.5,100.7 L207.0,107.9 L207.5,114.6 L208.0,120.8 L208.5,126.4 L209.0,131.2 L209.5,135.3 L210.0,138.5 L210.5,140.8 L211.0,142.2 L211.5,142.7 L212.0,142.2 L212.5,140.8 L213.0,138.5 L213.5,135.3 L214.0,131.2 L214.5,126.4 L215.0,120.8 L215.5,114.6 L216.0,107.9 L216.5,100.7 L217.0,93.1 L217.5,85.2 L218.0,77.2 L218.5,69.2 L219.0,61.2 L219.5,53.4 L220.0,45.9 L220.5,38.7 L221.0,32.1 L221.5,26.0 L222.0,20.6 L222.5,15.9 L223.0,12.0 L223.5,9.0 L224.0,6.8 L224.5,5.6 L225.0,5.3 L225.5,6.0 L226.0,7.6 L226.5,10.1 L227.0,13.5 L227.5,17.7 L228.0,22.7 L228.5,28.4 L229.0,34.7 L229.5,41.5 L230.0,48.8 L230.5,56.5 L231.0,64.4 L231.5,72.4 L232.0,80.4 L232.5,88.4 L233.0,96.1 L233.5,103.6 L234.0,110.6 L234.5,117.2 L235.0,123.1 L235.5,128.4 L236.0,133.0 L236.5,136.7 L237.0,139.5 L237.5,141.5 L238.0,142.5 L238.5,142.6 L239.0,141.8 L239.5,140.0 L240.0,137.3 L240.5,133.8 L241.0,129.4 L241.5,124.3 L242.0,118.4 L242.5,112.0 L243.0,105.0 L243.5,97.7 L244.0,90.0 L244.5,82.0 L245.0,74.0 L245.5,66.0 L246.0,58.0 L246.5,50.3 L247.0,43.0 L247.5,36.0 L248.0,29.6 L248.5,23.7 L249.0,18.6 L249.5,14.2 L250.0,10.7 L250.5,8.0 L251.0,6.2 L251.5,5.4 L252.0,5.5 L252.5,6.5 L253.0,8.5 L253.5,11.3 L254.0,15.0 L254.5,19.6 L255.0,24.9 L255.5,30.8 L256.0,37.4 L256.5,44.4 L257.0,51.9 L257.5,59.6 L258.0,67.6 L258.5,75.6 L259.0,83.6 L259.5,91.5 L260.0,99.2 L260.5,106.5 L261.0,113.3 L261.5,119.6 L262.0,125.3 L262.5,130.3 L263.0,134.5 L263.5,137.9 L264.0,140.4 L264.5,142.0 L265.0,142.7 L265.5,142.4 L266.0,141.2 L266.5,139.0 L267.0,136.0 L267.5,132.1 L268.0,127.4 L268.5,122.0 L269.0,115.9" fill="none" stroke="#030f1c" stroke-width="1.8"/><line x1="1" x2="269" y1="6.5" y2="6.5" stroke="#4a4a4a" stroke-width="1"/><line x1="1" x2="269" y1="74.5" y2="74.5" stroke="#4a4a4a" stroke-width="1"/><line x1="1" x2="269" y1="143.5" y2="143.5" stroke="#4a4a4a" stroke-width="1"/></svg>
<div class="r" style="left:273px;top:260px;width:812px;height:64px;background:#821e82;"></div>
<div class="r" style="left:273px;top:340px;width:812px;height:54px;background:#821e82;"></div>
<div class="r" style="left:273px;top:402px;width:812px;height:647px;background:#333333;"></div>
<div class="r" style="left:281px;top:467px;width:796px;height:54px;background:#666666;"></div>
<div class="r" style="left:281px;top:467px;width:561px;height:54px;background:#ff6600;"></div>
<div class="r" style="left:281px;top:529px;width:796px;height:54px;background:#666666;"></div>
<div class="r" style="left:282px;top:530px;width:794px;height:52px;background:#000;"></div>
<div class="r" style="left:282px;top:530px;width:782px;height:52px;background:#ff0000;"></div>
<div class="r" style="left:281px;top:591px;width:796px;height:54px;background:#666666;"></div><div class="r" style="left:527px;top:594px;width:547px;height:48px;background:#333333;"></div>
<div class="r" style="left:281px;top:653px;width:796px;height:54px;background:#666666;"></div><div class="r" style="left:337px;top:656px;width:737px;height:48px;background:#333333;"></div>
<div class="r" style="left:281px;top:715px;width:796px;height:54px;background:#666666;"></div><div class="r" style="left:502px;top:718px;width:572px;height:48px;background:#333333;"></div>
<div class="r" style="left:281px;top:777px;width:796px;height:54px;background:#666666;"></div><div class="r" style="left:527px;top:780px;width:547px;height:48px;background:#333333;"></div>
<div class="r" style="left:281px;top:839px;width:796px;height:54px;background:#666666;"></div>
<div class="r" style="left:281px;top:839px;width:13px;height:54px;background:#ff6600;"></div>
<div class="r" style="left:281px;top:901px;width:796px;height:54px;background:#666666;"></div>
<div class="r" style="left:442px;top:904px;width:632px;height:48px;background:transparent;border:1px solid #3c3c3c;box-sizing:border-box;"></div>
<div class="r" style="left:281px;top:963px;width:796px;height:78px;background:#666666;"></div>
<div class="r" style="left:493px;top:966px;width:581px;height:72px;background:transparent;border:1px solid #3c3c3c;box-sizing:border-box;"></div>
<svg class="r" style="left:0;top:0" width="80" height="38" viewBox="0 0 80 38"><g fill="none" stroke-linecap="round" stroke-linejoin="miter"><g stroke="#fff"><path d="M15.4 10.6 L7.2 19 L15.4 27.4" stroke-width="3.5"/><path d="M8 19 H24.3" stroke-width="3.9"/></g><g stroke="#9d4e9f"><path d="M49.6 10.6 L57.8 19 L49.6 27.4" stroke-width="3.5"/><path d="M57 19 H40.7" stroke-width="3.9"/></g></g></svg>
<svg class="r" style="left:0;top:38px" width="40" height="38" viewBox="0 0 40 38"><path d="M10 14.5 L18.5 23 L27 14.5" fill="none" stroke="#fff" stroke-width="3.6" stroke-linecap="round" stroke-linejoin="miter"/></svg>
<svg class="r" style="left:0;top:193px" width="40" height="38" viewBox="0 0 40 38"><path d="M10 14.5 L18.5 23 L27 14.5" fill="none" stroke="#fff" stroke-width="3.6" stroke-linecap="round" stroke-linejoin="miter"/></svg>
<svg class="r" style="left:700px;top:262px" width="70" height="60" viewBox="700 262 70 60"><path d="M741.03 282.05 A12.9 12.9 0 1 1 724.97 282.05" fill="none" stroke="#ff6600" stroke-width="5.4" stroke-linecap="round"/><rect x="730.45" y="275.9" width="5.25" height="18.1" rx="1.4" fill="#ff6600"/></svg>
<div class="tl">
<span class="t" style="left:42.00px;top:46.00px;font-size:23.25px;transform:scaleX(1.0470);">Application settings</span>
<span class="t" style="left:81.00px;top:84.00px;font-size:23.25px;transform:scaleX(0.9600);">License</span>
<span class="t" style="left:81.00px;top:122.00px;font-size:23.25px;transform:scaleX(0.9805);">Resource usage</span>
<span class="t" style="left:81.00px;top:160.00px;font-size:23.25px;transform:scaleX(1.0105);">Scheduler</span>
<span class="t" style="left:41.09px;top:201.00px;font-size:23.25px;transform:scaleX(1.1036);">I/O</span>
<span class="t" style="left:81.30px;top:239.00px;font-size:23.25px;transform:scaleX(1.0646);">Audio I/O</span>
<span class="t" style="left:41.41px;top:280.00px;font-size:23.25px;transform:scaleX(0.9431);">Relay</span>
<span class="t" style="left:1025.30px;top:8.00px;font-size:23.25px;transform:scaleX(1.0300);">About</span>
<span class="t" style="left:288.70px;top:51.00px;font-size:23.25px;">I</span>
<span class="t" style="left:335.63px;top:51.00px;font-size:23.25px;transform:scaleX(1.0350);">IN</span>
<span class="t" style="left:476.35px;top:51.00px;font-size:23.25px;transform:scaleX(0.9231);">IN SCOPE</span>
<span class="t" style="left:759.78px;top:51.00px;font-size:23.25px;transform:scaleX(0.9178);">OUT SCOPE</span>
<span class="t" style="left:981.65px;top:51.00px;font-size:23.25px;transform:scaleX(0.9500);">OUT</span>
<span class="t" style="left:1056.89px;top:51.00px;font-size:23.25px;transform:scaleX(1.0125);">O</span>
<span class="t" style="left:607.62px;top:273.00px;font-size:36px;font-weight:700;transform:scaleX(0.9415);">Relay</span>
<span class="t" style="left:646.40px;top:351.00px;font-size:28.5px;transform:scaleX(0.9014);">Relay</span>
<span class="t" style="left:281.11px;top:416.00px;font-size:27.5px;transform:scaleX(0.9456);">Relay</span>
<span class="t" style="left:281.00px;top:483.00px;font-size:23.25px;transform:scaleX(1.0613);">Detection threshold</span>
<span class="t" style="left:934.70px;top:483.00px;font-size:23.25px;transform:scaleX(0.9957);">-7.1 dB (44%)</span>
<span class="t" style="left:997.93px;top:545.00px;font-size:23.25px;transform:scaleX(0.9746);">98.4 %</span>
<span class="t" style="left:283.80px;top:607.00px;font-size:23.25px;transform:scaleX(1.0263);">Target server IP/name</span>
<span class="t" style="left:283.80px;top:669.00px;font-size:23.25px;transform:scaleX(1.0628);">Port</span>
<span class="t" style="left:283.80px;top:731.00px;font-size:23.25px;transform:scaleX(0.9645);">Relay OPEN PI code</span>
<span class="t" style="left:283.80px;top:793.00px;font-size:23.25px;transform:scaleX(0.9524);">Relay CLOSED PI code</span>
<span class="t" style="left:281.00px;top:855.00px;font-size:23.25px;transform:scaleX(1.0394);">Repeat interval</span>
<span class="t" style="left:957.59px;top:855.00px;font-size:23.25px;transform:scaleX(1.0051);">60 seconds</span>
<span class="t" style="left:283.80px;top:917.00px;font-size:23.25px;transform:scaleX(1.0088);">Active PI code</span>
<span class="t" style="left:283.80px;top:991.00px;font-size:23.25px;transform:scaleX(1.0213);">Last transmit result</span>
<span class="t" style="left:535.00px;top:608.00px;font-size:21.67px;font-family:'Liberation Mono',monospace;">127.0.0.1</span>
<span class="t" style="left:344.10px;top:670.00px;font-size:21.67px;font-family:'Liberation Mono',monospace;">4001</span>
<span class="t" style="left:510.80px;top:732.00px;font-size:21.67px;font-family:'Liberation Mono',monospace;">1111</span>
<span class="t" style="left:534.80px;top:794.00px;font-size:21.67px;font-family:'Liberation Mono',monospace;">2222</span>
<span class="t" style="left:450.10px;top:918.00px;font-size:21.67px;font-family:'Liberation Mono',monospace;">2222</span>
<span class="t" style="left:500.50px;top:977.50px;font-size:21.67px;font-family:'Liberation Mono',monospace;">Successfullly sent string PI=2222</span>
<span class="t" style="left:500.50px;top:1005.50px;font-size:21.67px;font-family:'Liberation Mono',monospace;">Message # 2</span>
<span class="t" style="left:351.70px;top:111.00px;font-size:12px;">-6</span>
<span class="t" style="left:351.70px;top:140.00px;font-size:12px;">-12</span>
<span class="t" style="left:351.70px;top:170.00px;font-size:12px;">-18</span>
<span class="t" style="left:351.70px;top:199.50px;font-size:12px;">-24</span>
<span class="t" style="left:1012.70px;top:111.00px;font-size:12px;">-6</span>
<span class="t" style="left:1012.70px;top:140.00px;font-size:12px;">-12</span>
<span class="t" style="left:1012.70px;top:170.00px;font-size:12px;">-18</span>
<span class="t" style="left:1012.70px;top:199.50px;font-size:12px;">-24</span>
<span class="t" style="left:401.00px;top:96.00px;font-size:12px;color:#787878;transform:scaleX(0.8942);">0.010 sec</span>
<span class="t" style="left:695.20px;top:96.00px;font-size:12px;color:#787878;transform:scaleX(0.8942);">0.010 sec</span>
</div>
<svg class="r" style="left:393px;top:86px" width="270" height="150" viewBox="0 0 270 150"><path d="M1.0,17.0 L1.5,21.6 L2.0,27.0 L2.5,33.0 L3.0,39.6 L3.5,46.6 L4.0,54.1 L4.5,61.8 L5.0,69.7 L5.5,77.7 L6.0,85.6 L6.5,93.4 L7.0,100.9 L7.5,108.0 L8.0,114.7 L8.5,120.9 L9.0,126.4 L9.5,131.2 L10.0,135.2 L10.5,138.3 L11.0,140.6 L11.5,142.0 L12.0,142.5 L12.5,142.0 L13.0,140.6 L13.5,138.3 L14.0,135.2 L14.5,131.2 L15.0,126.4 L15.5,120.9 L16.0,114.7 L16.5,108.0 L17.0,100.9 L17.5,93.4 L18.0,85.6 L18.5,77.7 L19.0,69.7 L19.5,61.8 L20.0,54.1 L20.5,46.6 L21.0,39.6 L21.5,33.0 L22.0,27.0 L22.5,21.6 L23.0,17.0 L23.5,13.1 L24.0,10.1 L24.5,8.0 L25.0,6.8 L25.5,6.5 L26.0,7.2 L26.5,8.7 L27.0,11.2 L27.5,14.6 L28.0,18.7 L28.5,23.7 L29.0,29.3 L29.5,35.6 L30.0,42.4 L30.5,49.6 L31.0,57.2 L31.5,65.0 L32.0,72.9 L32.5,80.9 L33.0,88.7 L33.5,96.4 L34.0,103.8 L34.5,110.8 L35.0,117.3 L35.5,123.1 L36.0,128.4 L36.5,132.9 L37.0,136.5 L37.5,139.4 L38.0,141.3 L38.5,142.3 L39.0,142.4 L39.5,141.6 L40.0,139.8 L40.5,137.2 L41.0,133.7 L41.5,129.3 L42.0,124.2 L42.5,118.5 L43.0,112.1 L43.5,105.2 L44.0,97.9 L44.5,90.3 L45.0,82.5 L45.5,74.5 L46.0,66.5 L46.5,58.7 L47.0,51.1 L47.5,43.8 L48.0,36.9 L48.5,30.5 L49.0,24.8 L49.5,19.7 L50.0,15.3 L50.5,11.8 L51.0,9.2 L51.5,7.4 L52.0,6.6 L52.5,6.7 L53.0,7.7 L53.5,9.6 L54.0,12.5 L54.5,16.1 L55.0,20.6 L55.5,25.9 L56.0,31.7 L56.5,38.2 L57.0,45.2 L57.5,52.6 L58.0,60.3 L58.5,68.1 L59.0,76.1 L59.5,84.0 L60.0,91.8 L60.5,99.4 L61.0,106.6 L61.5,113.4 L62.0,119.7 L62.5,125.3 L63.0,130.3 L63.5,134.4 L64.0,137.8 L64.5,140.3 L65.0,141.8 L65.5,142.5 L66.0,142.2 L66.5,141.0 L67.0,138.9 L67.5,135.9 L68.0,132.0 L68.5,127.4 L69.0,122.0 L69.5,116.0 L70.0,109.4 L70.5,102.4 L71.0,94.9 L71.5,87.2 L72.0,79.3 L72.5,71.3 L73.0,63.4 L73.5,55.6 L74.0,48.1 L74.5,41.0 L75.0,34.3 L75.5,28.1 L76.0,22.6 L76.5,17.8 L77.0,13.8 L77.5,10.7 L78.0,8.4 L78.5,7.0 L79.0,6.5 L79.5,7.0 L80.0,8.4 L80.5,10.7 L81.0,13.8 L81.5,17.8 L82.0,22.6 L82.5,28.1 L83.0,34.3 L83.5,41.0 L84.0,48.1 L84.5,55.6 L85.0,63.4 L85.5,71.3 L86.0,79.3 L86.5,87.2 L87.0,94.9 L87.5,102.4 L88.0,109.4 L88.5,116.0 L89.0,122.0 L89.5,127.4 L90.0,132.0 L90.5,135.9 L91.0,138.9 L91.5,141.0 L92.0,142.2 L92.5,142.5 L93.0,141.8 L93.5,140.3 L94.0,137.8 L94.5,134.4 L95.0,130.3 L95.5,125.3 L96.0,119.7 L96.5,113.4 L97.0,106.6 L97.5,99.4 L98.0,91.8 L98.5,84.0 L99.0,76.1 L99.5,68.1 L100.0,60.3 L100.5,52.6 L101.0,45.2 L101.5,38.2 L102.0,31.7 L102.5,25.9 L103.0,20.6 L103.5,16.1 L104.0,12.5 L104.5,9.6 L105.0,7.7 L105.5,6.7 L106.0,6.6 L106.5,7.4 L107.0,9.2 L107.5,11.8 L108.0,15.3 L108.5,19.7 L109.0,24.8 L109.5,30.5 L110.0,36.9 L110.5,43.8 L111.0,51.1 L111.5,58.7 L112.0,66.5 L112.5,74.5 L113.0,82.5 L113.5,90.3 L114.0,97.9 L114.5,105.2 L115.0,112.1 L115.5,118.5 L116.0,124.2 L116.5,129.3 L117.0,133.7 L117.5,137.2 L118.0,139.8 L118.5,141.6 L119.0,142.4 L119.5,142.3 L120.0,141.3 L120.5,139.4 L121.0,136.5 L121.5,132.9 L122.0,128.4 L122.5,123.1 L123.0,117.3 L123.5,110.8 L124.0,103.8 L124.5,96.4 L125.0,88.7 L125.5,80.9 L126.0,72.9 L126.5,65.0 L127.0,57.2 L127.5,49.6 L128.0,42.4 L128.5,35.6 L129.0,29.3 L129.5,23.7 L130.0,18.7 L130.5,14.6 L131.0,11.2 L131.5,8.7 L132.0,7.2 L132.5,6.5 L133.0,6.8 L133.5,8.0 L134.0,10.1 L134.5,13.1 L135.0,17.0 L135.5,21.6 L136.0,27.0 L136.5,33.0 L137.0,39.6 L137.5,46.6 L138.0,54.1 L138.5,61.8 L139.0,69.7 L139.5,77.7 L140.0,85.6 L140.5,93.4 L141.0,100.9 L141.5,108.0 L142.0,114.7 L142.5,120.9 L143.0,126.4 L143.5,131.2 L144.0,135.2 L144.5,138.3 L145.0,140.6 L145.5,142.0 L146.0,142.5 L146.5,142.0 L147.0,140.6 L147.5,138.3 L148.0,135.2 L148.5,131.2 L149.0,126.4 L149.5,120.9 L150.0,114.7 L150.5,108.0 L151.0,100.9 L151.5,93.4 L152.0,85.6 L152.5,77.7 L153.0,69.7 L153.5,61.8 L154.0,54.1 L154.5,46.6 L155.0,39.6 L155.5,33.0 L156.0,27.0 L156.5,21.6 L157.0,17.0 L157.5,13.1 L158.0,10.1 L158.5,8.0 L159.0,6.8 L159.5,6.5 L160.0,7.2 L160.5,8.7 L161.0,11.2 L161.5,14.6 L162.0,18.7 L162.5,23.7 L163.0,29.3 L163.5,35.6 L164.0,42.4 L164.5,49.6 L165.0,57.2 L165.5,65.0 L166.0,72.9 L166.5,80.9 L167.0,88.7 L167.5,96.4 L168.0,103.8 L168.5,110.8 L169.0,117.3 L169.5,123.1 L170.0,128.4 L170.5,132.9 L171.0,136.5 L171.5,139.4 L172.0,141.3 L172.5,142.3 L173.0,142.4 L173.5,141.6 L174.0,139.8 L174.5,137.2 L175.0,133.7 L175.5,129.3 L176.0,124.2 L176.5,118.5 L177.0,112.1 L177.5,105.2 L178.0,97.9 L178.5,90.3 L179.0,82.5 L179.5,74.5 L180.0,66.5 L180.5,58.7 L181.0,51.1 L181.5,43.8 L182.0,36.9 L182.5,30.5 L183.0,24.8 L183.5,19.7 L184.0,15.3 L184.5,11.8 L185.0,9.2 L185.5,7.4 L186.0,6.6 L186.5,6.7 L187.0,7.7 L187.5,9.6 L188.0,12.5 L188.5,16.1 L189.0,20.6 L189.5,25.9 L190.0,31.7 L190.5,38.2 L191.0,45.2 L191.5,52.6 L192.0,60.3 L192.5,68.1 L193.0,76.1 L193.5,84.0 L194.0,91.8 L194.5,99.4 L195.0,106.6 L195.5,113.4 L196.0,119.7 L196.5,125.3 L197.0,130.3 L197.5,134.4 L198.0,137.8 L198.5,140.3 L199.0,141.8 L199.5,142.5 L200.0,142.2 L200.5,141.0 L201.0,138.9 L201.5,135.9 L202.0,132.0 L202.5,127.4 L203.0,122.0 L203.5,116.0 L204.0,109.4 L204.5,102.4 L205.0,94.9 L205.5,87.2 L206.0,79.3 L206.5,71.3 L207.0,63.4 L207.5,55.6 L208.0,48.1 L208.5,41.0 L209.0,34.3 L209.5,28.1 L210.0,22.6 L210.5,17.8 L211.0,13.8 L211.5,10.7 L212.0,8.4 L212.5,7.0 L213.0,6.5 L213.5,7.0 L214.0,8.4 L214.5,10.7 L215.0,13.8 L215.5,17.8 L216.0,22.6 L216.5,28.1 L217.0,34.3 L217.5,41.0 L218.0,48.1 L218.5,55.6 L219.0,63.4 L219.5,71.3 L220.0,79.3 L220.5,87.2 L221.0,94.9 L221.5,102.4 L222.0,109.4 L222.5,116.0 L223.0,122.0 L223.5,127.4 L224.0,132.0 L224.5,135.9 L225.0,138.9 L225.5,141.0 L226.0,142.2 L226.5,142.5 L227.0,141.8 L227.5,140.3 L228.0,137.8 L228.5,134.4 L229.0,130.3 L229.5,125.3 L230.0,119.7 L230.5,113.4 L231.0,106.6 L231.5,99.4 L232.0,91.8 L232.5,84.0 L233.0,76.1 L233.5,68.1 L234.0,60.3 L234.5,52.6 L235.0,45.2 L235.5,38.2 L236.0,31.7 L236.5,25.9 L237.0,20.6 L237.5,16.1 L238.0,12.5 L238.5,9.6 L239.0,7.7 L239.5,6.7 L240.0,6.6 L240.5,7.4 L241.0,9.2 L241.5,11.8 L242.0,15.3 L242.5,19.7 L243.0,24.8 L243.5,30.5 L244.0,36.9 L244.5,43.8 L245.0,51.1 L245.5,58.7 L246.0,66.5 L246.5,74.5 L247.0,82.5 L247.5,90.3 L248.0,97.9 L248.5,105.2 L249.0,112.1 L249.5,118.5 L250.0,124.2 L250.5,129.3 L251.0,133.7 L251.5,137.2 L252.0,139.8 L252.5,141.6 L253.0,142.4 L253.5,142.3 L254.0,141.3 L254.5,139.4 L255.0,136.5 L255.5,132.9 L256.0,128.4 L256.5,123.1 L257.0,117.3 L257.5,110.8 L258.0,103.8 L258.5,96.4 L259.0,88.7 L259.5,80.9 L260.0,72.9 L260.5,65.0 L261.0,57.2 L261.5,49.6 L262.0,42.4 L262.5,35.6 L263.0,29.3 L263.5,23.7 L264.0,18.7 L264.5,14.6 L265.0,11.2 L265.5,8.7 L266.0,7.2 L266.5,6.5 L267.0,6.8 L267.5,8.0 L268.0,10.1 L268.5,13.1 L269.0,17.0" fill="none" stroke="#1ecbfa" stroke-width="1.65"/></svg>
<svg class="r" style="left:687px;top:86px" width="270" height="150" viewBox="0 0 270 150"><path d="M1.0,16.8 L1.5,21.6 L2.0,27.2 L2.5,33.4 L3.0,40.1 L3.5,47.3 L4.0,54.9 L4.5,62.8 L5.0,70.8 L5.5,78.8 L6.0,86.8 L6.5,94.6 L7.0,102.1 L7.5,109.3 L8.0,115.9 L8.5,122.0 L9.0,127.4 L9.5,132.1 L10.0,136.0 L10.5,139.0 L11.0,141.2 L11.5,142.4 L12.0,142.7 L12.5,142.0 L13.0,140.4 L13.5,137.9 L14.0,134.5 L14.5,130.3 L15.0,125.3 L15.5,119.6 L16.0,113.3 L16.5,106.5 L17.0,99.2 L17.5,91.5 L18.0,83.6 L18.5,75.6 L19.0,67.6 L19.5,59.6 L20.0,51.9 L20.5,44.4 L21.0,37.4 L21.5,30.8 L22.0,24.9 L22.5,19.6 L23.0,15.0 L23.5,11.3 L24.0,8.5 L24.5,6.5 L25.0,5.5 L25.5,5.4 L26.0,6.2 L26.5,8.0 L27.0,10.7 L27.5,14.2 L28.0,18.6 L28.5,23.7 L29.0,29.6 L29.5,36.0 L30.0,43.0 L30.5,50.3 L31.0,58.0 L31.5,66.0 L32.0,74.0 L32.5,82.0 L33.0,90.0 L33.5,97.7 L34.0,105.0 L34.5,112.0 L35.0,118.4 L35.5,124.3 L36.0,129.4 L36.5,133.8 L37.0,137.3 L37.5,140.0 L38.0,141.8 L38.5,142.6 L39.0,142.5 L39.5,141.5 L40.0,139.5 L40.5,136.7 L41.0,133.0 L41.5,128.4 L42.0,123.1 L42.5,117.2 L43.0,110.6 L43.5,103.6 L44.0,96.1 L44.5,88.4 L45.0,80.4 L45.5,72.4 L46.0,64.4 L46.5,56.5 L47.0,48.8 L47.5,41.5 L48.0,34.7 L48.5,28.4 L49.0,22.7 L49.5,17.7 L50.0,13.5 L50.5,10.1 L51.0,7.6 L51.5,6.0 L52.0,5.3 L52.5,5.6 L53.0,6.8 L53.5,9.0 L54.0,12.0 L54.5,15.9 L55.0,20.6 L55.5,26.0 L56.0,32.1 L56.5,38.7 L57.0,45.9 L57.5,53.4 L58.0,61.2 L58.5,69.2 L59.0,77.2 L59.5,85.2 L60.0,93.1 L60.5,100.7 L61.0,107.9 L61.5,114.6 L62.0,120.8 L62.5,126.4 L63.0,131.2 L63.5,135.3 L64.0,138.5 L64.5,140.8 L65.0,142.2 L65.5,142.7 L66.0,142.2 L66.5,140.8 L67.0,138.5 L67.5,135.3 L68.0,131.2 L68.5,126.4 L69.0,120.8 L69.5,114.6 L70.0,107.9 L70.5,100.7 L71.0,93.1 L71.5,85.2 L72.0,77.2 L72.5,69.2 L73.0,61.2 L73.5,53.4 L74.0,45.9 L74.5,38.7 L75.0,32.1 L75.5,26.0 L76.0,20.6 L76.5,15.9 L77.0,12.0 L77.5,9.0 L78.0,6.8 L78.5,5.6 L79.0,5.3 L79.5,6.0 L80.0,7.6 L80.5,10.1 L81.0,13.5 L81.5,17.7 L82.0,22.7 L82.5,28.4 L83.0,34.7 L83.5,41.5 L84.0,48.8 L84.5,56.5 L85.0,64.4 L85.5,72.4 L86.0,80.4 L86.5,88.4 L87.0,96.1 L87.5,103.6 L88.0,110.6 L88.5,117.2 L89.0,123.1 L89.5,128.4 L90.0,133.0 L90.5,136.7 L91.0,139.5 L91.5,141.5 L92.0,142.5 L92.5,142.6 L93.0,141.8 L93.5,140.0 L94.0,137.3 L94.5,133.8 L95.0,129.4 L95.5,124.3 L96.0,118.4 L96.5,112.0 L97.0,105.0 L97.5,97.7 L98.0,90.0 L98.5,82.0 L99.0,74.0 L99.5,66.0 L100.0,58.0 L100.5,50.3 L101.0,43.0 L101.5,36.0 L102.0,29.6 L102.5,23.7 L103.0,18.6 L103.5,14.2 L104.0,10.7 L104.5,8.0 L105.0,6.2 L105.5,5.4 L106.0,5.5 L106.5,6.5 L107.0,8.5 L107.5,11.3 L108.0,15.0 L108.5,19.6 L109.0,24.9 L109.5,30.8 L110.0,37.4 L110.5,44.4 L111.0,51.9 L111.5,59.6 L112.0,67.6 L112.5,75.6 L113.0,83.6 L113.5,91.5 L114.0,99.2 L114.5,106.5 L115.0,113.3 L115.5,119.6 L116.0,125.3 L116.5,130.3 L117.0,134.5 L117.5,137.9 L118.0,140.4 L118.5,142.0 L119.0,142.7 L119.5,142.4 L120.0,141.2 L120.5,139.0 L121.0,136.0 L121.5,132.1 L122.0,127.4 L122.5,122.0 L123.0,115.9 L123.5,109.3 L124.0,102.1 L124.5,94.6 L125.0,86.8 L125.5,78.8 L126.0,70.8 L126.5,62.8 L127.0,54.9 L127.5,47.3 L128.0,40.1 L128.5,33.4 L129.0,27.2 L129.5,21.6 L130.0,16.8 L130.5,12.7 L131.0,9.5 L131.5,7.2 L132.0,5.8 L132.5,5.3 L133.0,5.8 L133.5,7.2 L134.0,9.5 L134.5,12.7 L135.0,16.8 L135.5,21.6 L136.0,27.2 L136.5,33.4 L137.0,40.1 L137.5,47.3 L138.0,54.9 L138.5,62.8 L139.0,70.8 L139.5,78.8 L140.0,86.8 L140.5,94.6 L141.0,102.1 L141.5,109.3 L142.0,115.9 L142.5,122.0 L143.0,127.4 L143.5,132.1 L144.0,136.0 L144.5,139.0 L145.0,141.2 L145.5,142.4 L146.0,142.7 L146.5,142.0 L147.0,140.4 L147.5,137.9 L148.0,134.5 L148.5,130.3 L149.0,125.3 L149.5,119.6 L150.0,113.3 L150.5,106.5 L151.0,99.2 L151.5,91.5 L152.0,83.6 L152.5,75.6 L153.0,67.6 L153.5,59.6 L154.0,51.9 L154.5,44.4 L155.0,37.4 L155.5,30.8 L156.0,24.9 L156.5,19.6 L157.0,15.0 L157.5,11.3 L158.0,8.5 L158.5,6.5 L159.0,5.5 L159.5,5.4 L160.0,6.2 L160.5,8.0 L161.0,10.7 L161.5,14.2 L162.0,18.6 L162.5,23.7 L163.0,29.6 L163.5,36.0 L164.0,43.0 L164.5,50.3 L165.0,58.0 L165.5,66.0 L166.0,74.0 L166.5,82.0 L167.0,90.0 L167.5,97.7 L168.0,105.0 L168.5,112.0 L169.0,118.4 L169.5,124.3 L170.0,129.4 L170.5,133.8 L171.0,137.3 L171.5,140.0 L172.0,141.8 L172.5,142.6 L173.0,142.5 L173.5,141.5 L174.0,139.5 L174.5,136.7 L175.0,133.0 L175.5,128.4 L176.0,123.1 L176.5,117.2 L177.0,110.6 L177.5,103.6 L178.0,96.1 L178.5,88.4 L179.0,80.4 L179.5,72.4 L180.0,64.4 L180.5,56.5 L181.0,48.8 L181.5,41.5 L182.0,34.7 L182.5,28.4 L183.0,22.7 L183.5,17.7 L184.0,13.5 L184.5,10.1 L185.0,7.6 L185.5,6.0 L186.0,5.3 L186.5,5.6 L187.0,6.8 L187.5,9.0 L188.0,12.0 L188.5,15.9 L189.0,20.6 L189.5,26.0 L190.0,32.1 L190.5,38.7 L191.0,45.9 L191.5,53.4 L192.0,61.2 L192.5,69.2 L193.0,77.2 L193.5,85.2 L194.0,93.1 L194.5,100.7 L195.0,107.9 L195.5,114.6 L196.0,120.8 L196.5,126.4 L197.0,131.2 L197.5,135.3 L198.0,138.5 L198.5,140.8 L199.0,142.2 L199.5,142.7 L200.0,142.2 L200.5,140.8 L201.0,138.5 L201.5,135.3 L202.0,131.2 L202.5,126.4 L203.0,120.8 L203.5,114.6 L204.0,107.9 L204.5,100.7 L205.0,93.1 L205.5,85.2 L206.0,77.2 L206.5,69.2 L207.0,61.2 L207.5,53.4 L208.0,45.9 L208.5,38.7 L209.0,32.1 L209.5,26.0 L210.0,20.6 L210.5,15.9 L211.0,12.0 L211.5,9.0 L212.0,6.8 L212.5,5.6 L213.0,5.3 L213.5,6.0 L214.0,7.6 L214.5,10.1 L215.0,13.5 L215.5,17.7 L216.0,22.7 L216.5,28.4 L217.0,34.7 L217.5,41.5 L218.0,48.8 L218.5,56.5 L219.0,64.4 L219.5,72.4 L220.0,80.4 L220.5,88.4 L221.0,96.1 L221.5,103.6 L222.0,110.6 L222.5,117.2 L223.0,123.1 L223.5,128.4 L224.0,133.0 L224.5,136.7 L225.0,139.5 L225.5,141.5 L226.0,142.5 L226.5,142.6 L227.0,141.8 L227.5,140.0 L228.0,137.3 L228.5,133.8 L229.0,129.4 L229.5,124.3 L230.0,118.4 L230.5,112.0 L231.0,105.0 L231.5,97.7 L232.0,90.0 L232.5,82.0 L233.0,74.0 L233.5,66.0 L234.0,58.0 L234.5,50.3 L235.0,43.0 L235.5,36.0 L236.0,29.6 L236.5,23.7 L237.0,18.6 L237.5,14.2 L238.0,10.7 L238.5,8.0 L239.0,6.2 L239.5,5.4 L240.0,5.5 L240.5,6.5 L241.0,8.5 L241.5,11.3 L242.0,15.0 L242.5,19.6 L243.0,24.9 L243.5,30.8 L244.0,37.4 L244.5,44.4 L245.0,51.9 L245.5,59.6 L246.0,67.6 L246.5,75.6 L247.0,83.6 L247.5,91.5 L248.0,99.2 L248.5,106.5 L249.0,113.3 L249.5,119.6 L250.0,125.3 L250.5,130.3 L251.0,134.5 L251.5,137.9 L252.0,140.4 L252.5,142.0 L253.0,142.7 L253.5,142.4 L254.0,141.2 L254.5,139.0 L255.0,136.0 L255.5,132.1 L256.0,127.4 L256.5,122.0 L257.0,115.9 L257.5,109.3 L258.0,102.1 L258.5,94.6 L259.0,86.8 L259.5,78.8 L260.0,70.8 L260.5,62.8 L261.0,54.9 L261.5,47.3 L262.0,40.1 L262.5,33.4 L263.0,27.2 L263.5,21.6 L264.0,16.8 L264.5,12.7 L265.0,9.5 L265.5,7.2 L266.0,5.8 L266.5,5.3 L267.0,5.8 L267.5,7.2 L268.0,9.5 L268.5,12.7 L269.0,16.8" fill="none" stroke="#1ecbfa" stroke-width="1.65"/></svg>
</body></html>
